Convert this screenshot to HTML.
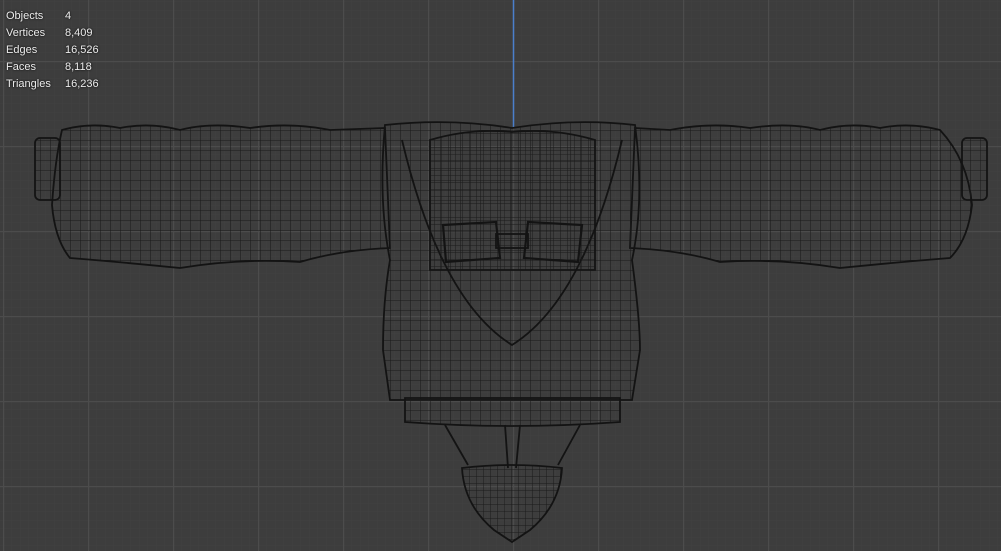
<!DOCTYPE html>
<html><head><style>
html,body{margin:0;padding:0;width:1001px;height:551px;overflow:hidden;background:#3d3d3d}
.st{position:absolute;left:6px;top:8px;font-family:"Liberation Sans",sans-serif;font-size:11px;color:#ececec;line-height:17px;text-shadow:0 0 2px #000}
.st span{display:inline-block;width:59px}
</style></head><body>
<svg width="1001" height="551" style="position:absolute;left:0;top:0">
<defs>
<pattern id="minor" x="3" y="61" width="8.5" height="8.5" patternUnits="userSpaceOnUse">
<path d="M0 0V8.5M0 0H8.5" stroke="#414141" stroke-width="1" fill="none"/></pattern>
<pattern id="major" x="3" y="61" width="85" height="85" patternUnits="userSpaceOnUse">
<path d="M0.5 0V85M0 0.5H85" stroke="#4c4c4c" stroke-width="1.5" fill="none"/></pattern>
<pattern id="mesh" width="10" height="10" patternUnits="userSpaceOnUse">
<path d="M0 0V10M0 0H10" stroke="#1a1a1a" stroke-width="1.1" fill="none"/></pattern>
<pattern id="mesh2" width="7" height="7" patternUnits="userSpaceOnUse">
<path d="M0 0V7M0 0H7" stroke="#1a1a1a" stroke-width="1" fill="none"/></pattern>
</defs>
<rect width="1001" height="551" fill="url(#minor)"/>
<rect width="1001" height="551" fill="url(#major)"/>
<line x1="513.5" y1="0" x2="513.5" y2="128" stroke="#4a7fcc" stroke-width="1.5"/>
<g stroke="#131313" stroke-width="1.8" fill="url(#mesh)">
<path d="M62 130 Q90 122 120 128 Q150 122 180 130 Q210 122 250 128 Q290 122 330 130 L385 128 L390 248 Q340 250 300 262 Q240 258 180 268 Q120 262 70 258 Q55 240 52 205 Q55 160 62 130Z"/>
<rect x="35" y="138" width="25" height="62" rx="5"/>
<path d="M940 130 Q910 122 880 128 Q850 122 820 130 Q790 122 750 128 Q710 122 670 130 L635 128 L630 248 Q680 250 720 262 Q780 258 840 268 Q900 262 950 258 Q968 240 972 205 Q968 160 940 130Z"/>
<rect x="962" y="138" width="25" height="62" rx="5"/>
<path d="M385 125 Q450 118 512 128 Q575 118 635 125 Q645 200 632 260 Q640 320 640 350 L632 400 L390 400 L383 350 Q383 300 390 260 Q378 200 385 125Z"/>
<path d="M405 398 L620 398 L620 422 Q512 430 405 422Z"/>
<path d="M402 140 Q440 300 512 345 Q584 300 622 140" fill="none"/>
<path d="M430 140 Q470 128 512 132 Q555 128 595 140 L595 270 L430 270Z" fill="url(#mesh2)"/>
<path d="M443 225 L496 222 L500 258 L446 262Z" fill="url(#mesh2)" stroke-width="2.2"/>
<path d="M528 222 L582 225 L578 262 L524 258Z" fill="url(#mesh2)" stroke-width="2.2"/>
<rect x="496" y="234" width="32" height="14" fill="none"/>
<path d="M445 425 L468 465 M580 425 L558 465 M505 425 L508 468 M520 425 L516 468" fill="none"/>
<path d="M462 468 Q512 462 562 468 Q560 505 530 530 L512 542 L494 530 Q464 505 462 468Z" fill="url(#mesh2)"/>
</g>
</svg>
<div class="st">
<div><span>Objects</span>4</div>
<div><span>Vertices</span>8,409</div>
<div><span>Edges</span>16,526</div>
<div><span>Faces</span>8,118</div>
<div><span>Triangles</span>16,236</div>
</div>
</body></html>
